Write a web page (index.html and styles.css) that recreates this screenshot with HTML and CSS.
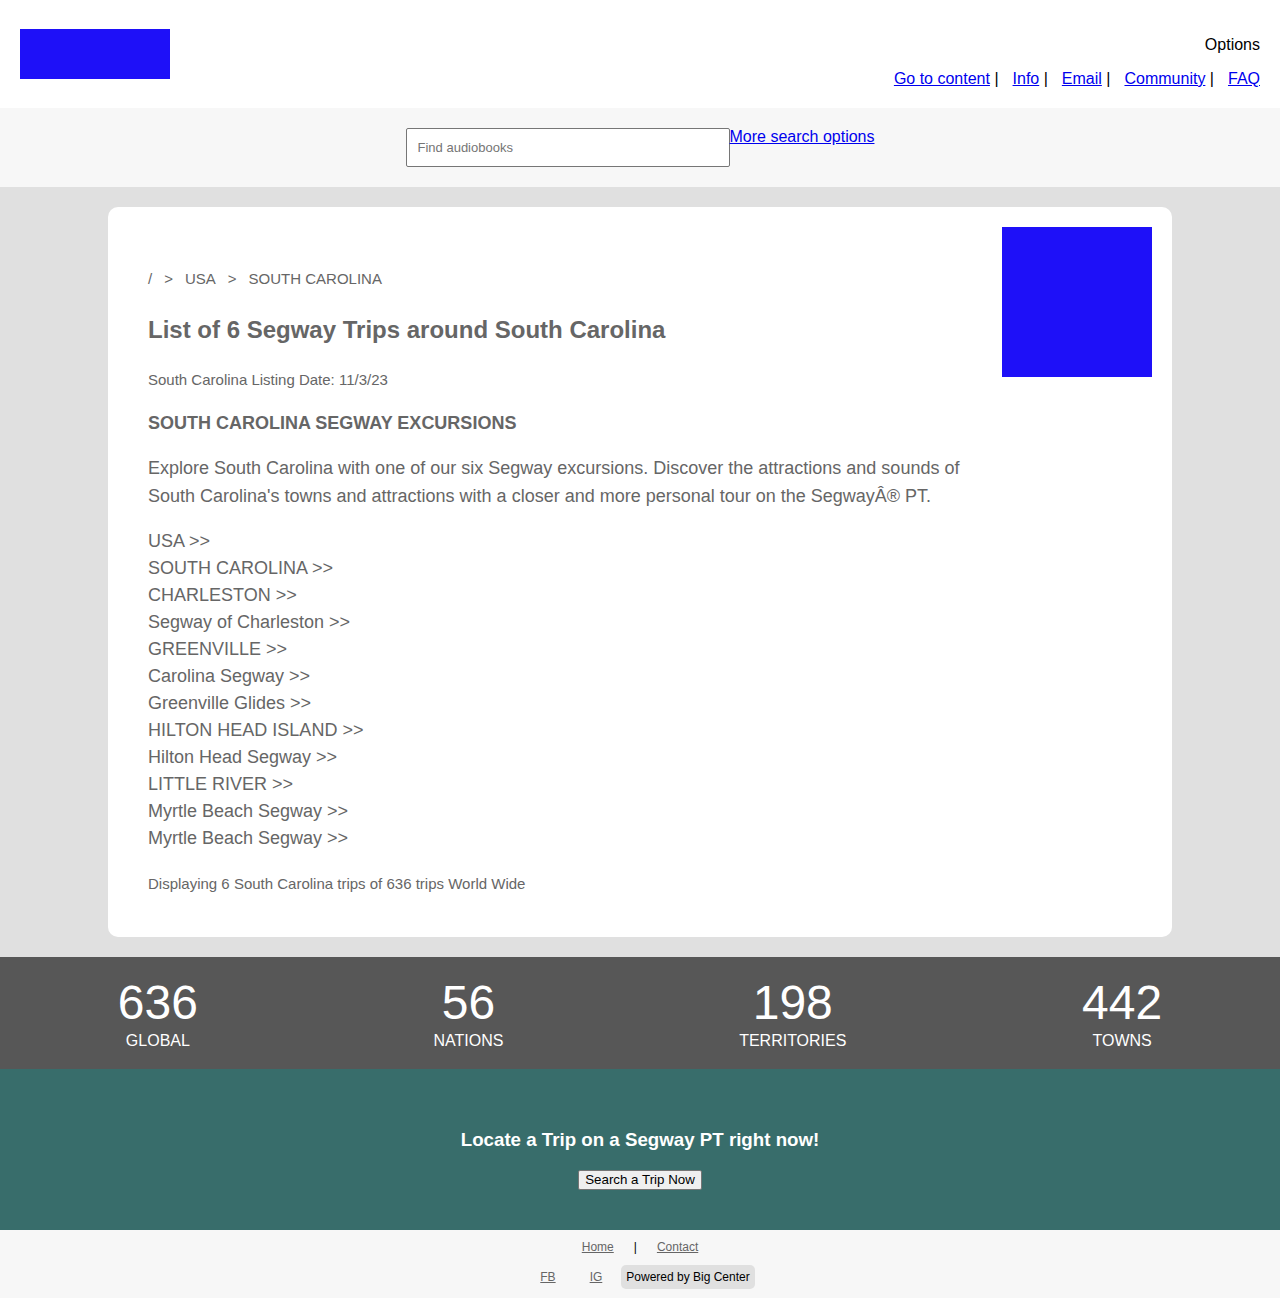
FILE: index.html
```html
<!DOCTYPE html>
<html lang="en">
<head>
<meta charset="utf-8">
<title>Segway Trips around South Carolina</title>
<link rel="stylesheet" href="styles.css">
</head>
<body>
<header class="site-header">
  <div class="logo"></div>
  <div class="header-right">
    <div class="options">Options</div>
    <nav class="top-links">
      <a href="#">Go to content</a> |<a class="tl" href="#">Info</a> |<a class="tl" href="#">Email</a> |<a class="tl" href="#">Community</a> |<a class="tl" href="#">FAQ</a>
    </nav>
  </div>
</header>

<div class="search-bar">
  <input class="search-input" type="text" placeholder="Find audiobooks">
  <a class="more-search" href="#">More search options</a>
</div>

<main class="main">
  <section class="card">
    <div class="content">
      <div class="breadcrumb"><span>/</span><span>&gt;</span><span>USA</span><span>&gt;</span><span>SOUTH CAROLINA</span></div>
      <h1 class="title">List of 6 Segway Trips around South Carolina</h1>
      <p class="date">South Carolina Listing Date: 11/3/23</p>
      <h2 class="subtitle">SOUTH CAROLINA SEGWAY EXCURSIONS</h2>
      <p class="intro">Explore South Carolina with one of our six Segway excursions. Discover the attractions and sounds of South Carolina's towns and attractions with a closer and more personal tour on the SegwayÂ® PT.</p>
      <ul class="trips">
        <li>USA &gt;&gt;</li>
        <li>SOUTH CAROLINA &gt;&gt;</li>
        <li>CHARLESTON &gt;&gt;</li>
        <li>Segway of Charleston &gt;&gt;</li>
        <li>GREENVILLE &gt;&gt;</li>
        <li>Carolina Segway &gt;&gt;</li>
        <li>Greenville Glides &gt;&gt;</li>
        <li>HILTON HEAD ISLAND &gt;&gt;</li>
        <li>Hilton Head Segway &gt;&gt;</li>
        <li>LITTLE RIVER &gt;&gt;</li>
        <li>Myrtle Beach Segway &gt;&gt;</li>
        <li>Myrtle Beach Segway &gt;&gt;</li>
      </ul>
      <p class="count">Displaying 6 South Carolina trips of 636 trips World Wide</p>
    </div>
    <div class="side-img"></div>
  </section>
</main>

<section class="stats">
  <div class="stat"><div class="num">636</div><div class="lbl">GLOBAL</div></div>
  <div class="stat"><div class="num">56</div><div class="lbl">NATIONS</div></div>
  <div class="stat"><div class="num">198</div><div class="lbl">TERRITORIES</div></div>
  <div class="stat"><div class="num">442</div><div class="lbl">TOWNS</div></div>
</section>

<section class="cta">
  <h3 class="cta-title">Locate a Trip on a Segway PT right now!</h3>
  <button class="cta-btn" type="button">Search a Trip Now</button>
</section>

<footer class="footer">
  <div class="foot-row1"><a href="#">Home</a><span class="fsep">|</span><a href="#">Contact</a></div>
  <div class="foot-row2"><a class="fb" href="#">FB</a><a class="ig" href="#">IG</a><span class="badge">Powered by Big Center</span></div>
</footer>
</body>
</html>
```

FILE: styles.css
```css
* { box-sizing: border-box; }
html, body { margin: 0; padding: 0; }
body {
  font-family: "Liberation Sans", Arial, Helvetica, sans-serif;
  color: #000;
  background: #fff;
}

.site-header {
  display: flex;
  justify-content: space-between;
  align-items: flex-start;
  height: 108px;
  padding: 29px 20px 0 20px;
}
.logo {
  width: 150px;
  height: 50px;
  background: #1e10f8;
}
.header-right {
  display: flex;
  flex-direction: column;
  align-items: flex-end;
  font-size: 16px;
  line-height: 18px;
}
.options { margin-top: 7px; }
.top-links { margin-top: 16px; }
.top-links a { color: #0000ee; text-decoration: underline; }
.top-links .tl { margin-left: 14px; }

.search-bar {
  background: #f7f7f7;
  height: 79px;
  padding-top: 20px;
  display: flex;
  justify-content: center;
  align-items: flex-start;
}
.search-input {
  width: 324px;
  height: 39px;
  border: 1px solid #767676;
  border-radius: 2px;
  padding: 0 11px;
  font-family: "Liberation Sans", Arial, sans-serif;
  font-size: 13px;
  background: #fff;
}
.search-input::placeholder { color: #757575; }
.more-search {
  color: #0000ee;
  font-size: 16px;
  line-height: 18px;
}

.main {
  background: #e0e0e0;
  padding: 20px 108px;
}
.card {
  background: #fff;
  border-radius: 10px;
  display: flex;
  justify-content: space-between;
  align-items: flex-start;
  padding: 20px 20px 44px 40px;
  color: #666;
}
.content { width: 834px; }
.side-img {
  width: 150px;
  height: 150px;
  background: #1e10f8;
  flex-shrink: 0;
}
.breadcrumb {
  display: flex;
  gap: 12px;
  margin-top: 42px;
  font-size: 15px;
  line-height: 20px;
}
.title {
  margin: 27px 0 0 0;
  font-size: 24px;
  line-height: 28px;
  font-weight: bold;
}
.date {
  margin: 27px 0 0 0;
  font-size: 15px;
  line-height: 18px;
}
.subtitle {
  margin: 24px 0 0 0;
  font-size: 18px;
  line-height: 20px;
  font-weight: bold;
}
.intro {
  margin: 21px 0 0 0;
  font-size: 18px;
  line-height: 28px;
}
.trips {
  list-style: none;
  margin: 18px 0 0 0;
  padding: 0;
  font-size: 18px;
  line-height: 27px;
}
.count {
  margin: 23px 0 0 0;
  font-size: 15px;
  line-height: 18px;
}

.stats {
  background: #575757;
  color: #fff;
  display: flex;
  justify-content: space-around;
  padding: 20px 0;
  text-align: center;
}
.num { font-size: 48px; line-height: 52px; }
.lbl { font-size: 16px; line-height: 18px; margin-top: 3px; }
.stats { padding-bottom: 19px; }

.cta {
  background: #386d6b;
  color: #fff;
  text-align: center;
  padding: 60px 0 40px 0;
}
.cta-title {
  margin: 0;
  font-size: 18.72px;
  line-height: 22px;
  font-weight: bold;
}
.cta-btn {
  margin-top: 19px;
  font-family: "Liberation Sans", Arial, sans-serif;
  font-size: 13.33px;
  line-height: 16px;
  padding: 1px 6px;
  color: #000;
  background: #efefef;
  border: 1px solid #767676;
  border-radius: 2px;
}

.footer {
  background: #f7f7f7;
  padding: 9px 0 9px 0;
  font-size: 12px;
  text-align: center;
}
.footer a { color: #666; text-decoration: underline; }
.foot-row1 {
  display: flex;
  justify-content: center;
  line-height: 16px;
}
.fsep { margin: 0 20px; color: #000; }
.foot-row2 {
  display: flex;
  justify-content: center;
  align-items: center;
  margin-top: 10px;
  padding-left: 15px;
  line-height: 16px;
}
.fb { margin-right: 34px; }
.ig { margin-right: 19px; }
.badge {
  background: #e0e0e0;
  border-radius: 5px;
  padding: 4px 5px;
  color: #000;
}
```
